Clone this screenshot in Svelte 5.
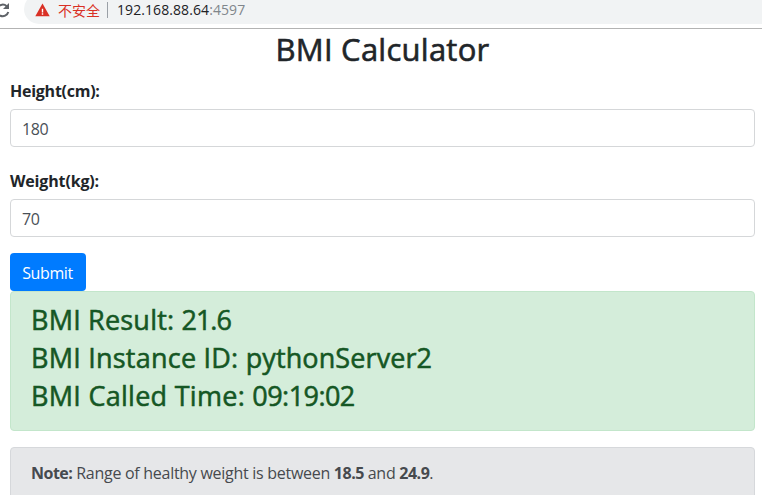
<script>
  let height = $state('180');
  let weight = $state('70');
  const results = [
    { label: 'BMI Result:', value: '21.6', cls: 'r1' },
    { label: 'BMI Instance ID:', value: 'pythonServer2', cls: 'r2' },
    { label: 'BMI Called Time:', value: '09:19:02', cls: 'r3' }
  ];
</script>

<div class="screen">
  <header class="toolbar">
    <svg class="reload" width="10" height="20" viewBox="0 0 10 20" aria-hidden="true">
      <path d="M6.7 6.2A5.8 5.8 0 1 0 8.3 12" fill="none" stroke="#5f6368" stroke-width="2" />
      <path d="M9 3v6H3z" fill="#5f6368" />
    </svg>
    <div class="address">
      <svg class="warn" width="15" height="14" viewBox="0 0 15 14" aria-hidden="true">
        <path d="M7.5 .5 14.7 13.3H.3z" fill="#d93025" />
        <path d="M6.8 5.7h1.4v3.7H6.8zM6.8 10.3h1.4v1.4H6.8z" fill="#fff" />
      </svg>
      <span class="insecure">不安全</span>
      <span class="divider"></span>
      <span class="url">192.168.88.64<span class="port">:4597</span></span>
    </div>
  </header>

  <main>
    <h2>BMI Calculator</h2>
    <label for="height">Height(cm):</label>
    <input id="height" type="text" bind:value={height} />
    <label class="second" for="weight">Weight(kg):</label>
    <input id="weight" type="text" bind:value={weight} />
    <button type="button">Submit</button>
    <section class="alert success">
      {#each results as r}
        <h3 class={r.cls}>{r.label} <span>{r.value}</span></h3>
      {/each}
    </section>
    <section class="alert note">
      <strong>Note:</strong> Range of healthy weight is between <strong>18.5</strong> and <strong>24.9</strong>.
    </section>
  </main>
</div>

<style>
  .screen {
    width: 762px;
    height: 495px;
    overflow: hidden;
    background: #fff;
    color: #212529;
    font: 400 16px/24px "Open Sans", "Noto Sans", sans-serif;
    letter-spacing: -0.28px;
  }
  .screen * { box-sizing: border-box; }
  .toolbar {
    height: 29px;
    display: flex;
    border-bottom: 1px solid #b3b3b3;
    overflow: hidden;
  }
  .reload { flex: none; }
  .address {
    flex: 1;
    height: 30px;
    margin: -6px -20px 0 14px;
    padding: 6px 0 4px 11px;
    display: flex;
    align-items: center;
    background: #f1f3f4;
    border-radius: 15px 0 0 15px;
    font-size: 14px;
    line-height: 20px;
    letter-spacing: 0;
    color: #202124;
    white-space: nowrap;
  }
  .warn { flex: none; }
  .insecure {
    margin-left: 8px;
    width: 43px;
    color: #d93025;
    font-family: "Noto Sans CJK SC", sans-serif;
    font-weight: 400;
    line-height: 18px;
    padding-bottom: 1px;
  }
  .divider { width: 1px; height: 16px; margin: 0 9px 0 6px; background: #9aa0a6; }
  .url { letter-spacing: 0.08px; }
  .port { color: #80868b; }
  main {
    display: flex;
    flex-direction: column;
    width: 745px;
    margin-left: 10px;
    padding-top: 1px;
  }
  h2 {
    margin: 0 0 8px;
    height: 39px;
    font-size: 31px;
    line-height: 39px;
    font-weight: 500;
    letter-spacing: 0.25px;
    text-align: center;
    -webkit-text-stroke: 0.6px currentColor;
  }
  label {
    height: 24px;
    margin-bottom: 8px;
    padding-top: 2px;
    font-weight: 700;
    letter-spacing: -0.25px;
  }
  .second { margin-top: 20px; letter-spacing: -0.15px; }
  input {
    height: 38px;
    padding: 7px 11px 5px;
    border: 1px solid #d5d7d9;
    border-radius: 4px;
    background: #fff;
    color: #495057;
    font: inherit;
    letter-spacing: -0.4px;
  }
  button {
    width: 76px;
    height: 38px;
    margin-top: 16px;
    padding: 1px 1px 0 0;
    border: 0;
    border-radius: 4px;
    background: #007bff;
    color: #fff;
    font: inherit;
    letter-spacing: -0.4px;
  }
  .alert { padding: 12px 20px; border: 1px solid; border-radius: 4px; white-space: nowrap; }
  .success { height: 140px; padding-top: 11px; color: #155724; background: #d4edda; border-color: #c3e6cb; }
  h3 {
    margin: 0 0 4px;
    font-size: 27px;
    line-height: 34px;
    font-weight: 500;
    -webkit-text-stroke: 0.55px currentColor;
  }
  .r1 { letter-spacing: 0.2px; }
  .r1 span { letter-spacing: -1px; }
  .r2 { letter-spacing: 0.23px; }
  .r2 span { letter-spacing: 0.1px; }
  .r3 { letter-spacing: 0.28px; }
  .r3 span { letter-spacing: -0.55px; }
  .note { height: 64px; margin-top: 16px; padding-top: 13px; color: #464a4e; background: #e6e7e9; border-color: #d6d8db; }
  .note strong { letter-spacing: -0.5px; }
</style>
